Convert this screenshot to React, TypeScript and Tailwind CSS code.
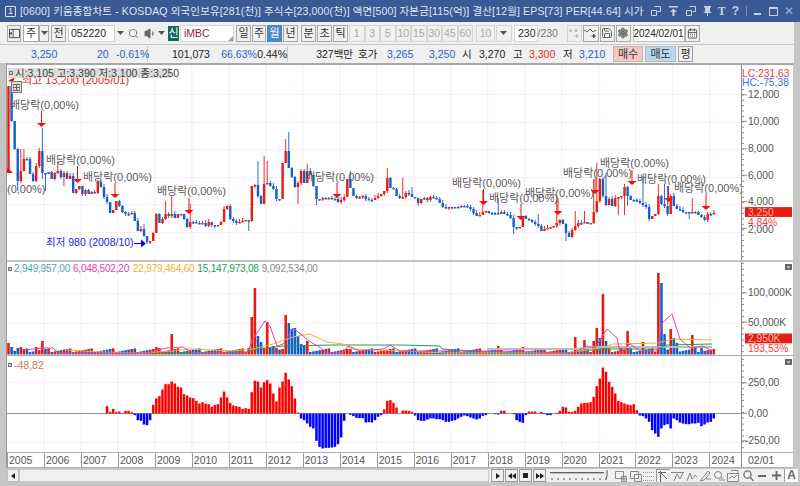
import { Search, Volume1, Settings, Save, CalendarDays } from "lucide-react";

// closes in screen px, one row per year (2005 ~ 2024/02)
const closes = [
  85, 120, 148, 180, 170, 158, 158, 173, 180, 165, 150, 172,
  173, 171, 178, 172, 170, 176, 172, 178, 175, 192, 188, 185,
  193, 189, 193, 191, 192, 181, 186, 196, 201, 212, 209, 200,
  205, 211, 213, 213, 212, 220, 230, 228, 235, 241, 240, 232,
  213, 222, 218, 213, 215, 213, 217, 213, 213, 218, 226, 221,
  221, 222, 223, 222, 225, 221, 224, 225, 224, 221, 208, 205,
  218, 220, 222, 221, 220, 219, 220, 185, 184, 195, 203, 183,
  182, 185, 188, 198, 198, 162, 150, 167, 176, 186, 182, 170,
  182, 170, 174, 185, 198, 198, 197, 198, 197, 198, 198, 201,
  199, 196, 178, 187, 195, 197, 196, 195, 198, 199, 199, 197,
  195, 193, 190, 177, 187, 188, 195, 197, 196, 192, 193, 196,
  197, 202, 198, 197, 199, 196, 197, 198, 202, 206, 207, 206,
  206, 206, 206, 205, 205, 206, 208, 212, 215, 214, 211, 210,
  212, 212, 212, 213, 211, 213, 214, 217, 226, 227, 226, 215,
  218, 219, 221, 223, 225, 230, 228, 227, 226, 225, 222, 219,
  223, 232, 236, 229, 225, 222, 222, 221, 223, 222, 211, 200,
  178, 195, 204, 198, 205, 197, 196, 195, 186, 195, 199, 199,
  200, 202, 204, 206, 218, 215, 213, 195, 203, 205, 213, 195,
  205, 208, 209, 211, 211, 212, 211, 211, 214, 216, 219, 213,
  213, 212,
];

const monthX = (i: number) => 8.5 + 3.08 * i;
const nearest = (x: number) => Math.round((x - 8.5) / 3.08);

// [x, high, low]
const wicks: [number, number, number][] = [
  [20, 148, 0], [25, 148, 0], [17, 0, 190], [42, 127, 178], [45, 0, 190], [57, 160, 0], [63, 0, 185],
  [143, 223, 0], [167, 200, 0], [173, 195, 0], [190, 203, 0], [223, 205, 0], [250, 0, 230],
  [257, 160, 0], [265, 155, 0], [268, 160, 0], [285, 138, 0], [290, 131, 0], [299, 0, 203],
  [307, 163, 0], [318, 0, 204], [349, 170, 0], [388, 167, 0], [404, 177, 0], [413, 186, 0],
  [417, 0, 205], [483, 189, 0], [497, 195, 0], [499, 197, 0], [515, 0, 233], [539, 213, 0],
  [558, 198, 0], [567, 0, 240], [576, 210, 0], [583, 210, 0], [595, 178, 0], [598, 162, 0],
  [605, 172, 205], [617, 0, 214], [623, 183, 214], [629, 0, 205], [643, 175, 0], [650, 0, 220],
  [658, 183, 0], [663, 183, 0], [668, 185, 0], [674, 192, 0], [688, 0, 218], [693, 197, 0],
];

const highs: Record<number, number> = {};
const lows: Record<number, number> = {};
wicks.forEach(([x, h, l]) => {
  if (h) highs[nearest(x)] = h;
  if (l) lows[nearest(x)] = l;
});

const candles = closes.map((c, i) => {
  const o = i === 0 ? 172 : closes[i - 1];
  const top = Math.min(o, c);
  const bot = Math.max(o, c);
  return {
    x: monthX(i),
    top,
    bot: bot - top < 1.5 ? top + 1.5 : bot,
    high: highs[i] ?? top - ((i * 37) % 11) % 4,
    low: lows[i] ?? bot + ((i * 53) % 7) % 3,
    up: c < o,
  };
});

// tops of the tall volume bars, in screen px
const redVol: [number, number][] = [
  [10, 342], [41, 340], [22, 346], [37, 346], [155, 346], [158, 346], [173, 333], [250, 347], [253, 316],
  [256, 287], [266, 321], [276, 347], [285, 314], [306, 340], [351, 348], [391, 348],
  [499, 345], [524, 346], [539, 348], [560, 349], [576, 336], [585, 339], [594, 340], [597, 327],
  [604, 293], [620, 345], [629, 330], [644, 341], [659, 272], [671, 328], [693, 334],
];
const blueVol: [number, number][] = [
  [13, 346], [19, 347], [160, 347], [259, 335], [262, 341], [269, 347], [272, 345], [288, 322], [291, 328],
  [294, 327], [297, 335], [300, 343], [303, 345], [600, 337], [607, 340], [662, 282],
  [665, 333], [675, 337], [678, 342], [696, 345], [700, 347],
];
const volTops: Record<number, number> = {};
[...redVol, ...blueVol].forEach(([x, t]) => {
  volTops[nearest(x)] = t;
});
const volRed = new Set(redVol.map(([x]) => nearest(x)));
const volBlue = new Set(blueVol.map(([x]) => nearest(x)));

const pinkLine =
  "23,349 43,347 53,347 58,352 150,352 153,350 167,347 183,346 193,352 247,352 253,338 265,320 270,325 277,345 283,343 293,327 302,334 312,342 318,345 327,352 343,352 348,345 360,350 383,348 390,344 400,350 500,350 573,352 587,345 595,347 607,328 617,337 620,352 630,343 640,350 657,350 662,322 672,313 680,338 690,347 703,345 712,350";
const orangeLine =
  "65,349 100,351 140,352 173,350 190,348 233,350 253,348 273,343 293,336 310,333 327,341 343,343 353,348 400,350 448,352 567,352 600,347 613,343 657,342 673,338 712,339";
const greenLine =
  "150,352 247,351 257,348 283,345 333,344 400,344 440,345 442,348 487,351 567,352 600,348 657,348 667,344 712,343";
const grayLine = "487,348 573,348 600,346 650,346 712,346";

// macd bars, heights in 3x zoom units
const macdA = [
  22, 5, 14, 4, 6, -1, 8, 8, 4, -5, -20, -22, -33, -35, -20, 26, 45, 52, 72, 88, 88, 96, 90, 80, 78, 58, 54, 48, 46, 38, 30,
  34, 30, 28, 20, 26, 28, 48, 66, 48, 32, 24, 22, 20, 14, 16, 14, 64, 98, 96, 78, 94, 100, 90, 60, 36, 78, 96, 122, 102, 82,
  45, 3, -15, -20, -30, -40, -45, -82, -100, -105, -103, -103, -102, -100, -92, -72, -22, 0, -4, -8, -13, -14, -14, -27, -26,
  -27, -20, -10, -5, 12, 38, 40, 32, 18,
];
const macdB = [
  9, 9, 8, 5, -6, -20, -22, -22, -18, -15, -15, -17, -17, -20, -25, -25, -22, -20, -15, -10, -6, -8, -12, -15, -18, -15, -7,
  -5, 0, 0, -2, -3, 8, 8, 0, 0, -2, -20, -25, -28, -5, 6, 6, 6, 0, 5, -2, -5, -5, 0, 2, 8, 20, 18, 5, 5, 8, 20, 30, 32, 32,
  34, 50, 82, 105, 138, 125, 95, 80, 60, 38, 34, 30, 27, 25, 28, 10, -6, -8, -15, -25, -50, -60, -70, -45, -35, -32, -45, -15,
  -20, -27, -30, -32, -32, -30, -30, -28, -38, -33, -27, -25, -15,
];
const macd: Record<number, number> = {};
macdA.forEach((v, j) => {
  macd[32 + j] = v;
});
macdB.forEach((v, j) => {
  macd[230 - macdB.length + j] = v;
});

const years = Array.from({ length: 20 }, (_, i) => ({
  label: String(2005 + i),
  x: 6.5 + 36.98 * i,
}));

const divs: { x: number; y: number; ax: number; a1: number; a2: number }[] = [
  { x: 10, y: 104, ax: 41.5, a1: 110, a2: 126 },
  { x: 46, y: 159, ax: 77.5, a1: 165, a2: 182 },
  { x: 83, y: 176, ax: 115, a1: 182, a2: 197 },
  { x: 157, y: 190, ax: 189, a1: 197, a2: 213 },
  { x: 305, y: 176, ax: 337, a1: 182, a2: 197 },
  { x: 452, y: 182, ax: 483.5, a1: 188, a2: 204 },
  { x: 489, y: 197, ax: 521, a1: 203, a2: 219 },
  { x: 525, y: 192, ax: 558, a1: 198, a2: 214 },
  { x: 563, y: 172, ax: 595, a1: 178, a2: 193 },
  { x: 600, y: 162, ax: 632, a1: 169, a2: 184 },
  { x: 637, y: 178, ax: 668.5, a1: 185, a2: 201 },
  { x: 674, y: 187, ax: 706, a1: 193, a2: 209 },
];

function Grid({ rows, top, bottom }: { rows: number[]; top: number; bottom: number }) {
  return (
    <g stroke="#fce8fc" strokeWidth="1">
      {rows.map((y) => (
        <line key={y} x1="7" x2="741" y1={y + 0.5} y2={y + 0.5} />
      ))}
      {years.slice(1).map((yr) => (
        <line key={yr.label} x1={yr.x + 0.5} x2={yr.x + 0.5} y1={top} y2={bottom} />
      ))}
    </g>
  );
}

function AxisTicks({ top, bottom, step, major }: { top: number; bottom: number; step: number; major: number[] }) {
  const minor: number[] = [];
  for (let y = major[0] % step; y <= bottom; y += step) if (y >= top) minor.push(y);
  return (
    <g stroke="#8a8a8a" strokeWidth="1">
      {minor.map((y) => (
        <line key={y} x1="741" x2="743" y1={y + 0.5} y2={y + 0.5} />
      ))}
      {major.map((y) => (
        <line key={y} x1="741" x2="746" y1={y + 0.5} y2={y + 0.5} />
      ))}
    </g>
  );
}

function PriceChart() {
  return (
    <svg viewBox="7 64 734 195" className="w-[734px] h-[195px] shrink-0 overflow-hidden">
      <Grid rows={[93, 121, 148, 176, 203, 231]} top={64} bottom={259} />
      {candles.map((c, i) => (
        <g key={i}>
          <line
            x1={c.x}
            x2={c.x}
            y1={c.high}
            y2={c.low}
            stroke={c.up ? "#f0302a" : "#2a6fd8"}
            strokeWidth="1"
          />
          <rect x={c.x - 1.2} y={c.top} width="2.4" height={c.bot - c.top} fill={c.up ? "#ea1c10" : "#1060d0"} />
        </g>
      ))}
      {divs.map((d) => (
        <g key={d.x}>
          <text x={d.x} y={d.y + 4} fontSize="11" fill="#5a5a5a">
            배당락(0,00%)
          </text>
          <line x1={d.ax} x2={d.ax} y1={d.a1} y2={d.a2 - 3} stroke="#f01010" strokeWidth="1" />
          <polygon points={`${d.ax - 4.5},${d.a2 - 4} ${d.ax + 4.5},${d.a2 - 4} ${d.ax},${d.a2}`} fill="#f01010" />
        </g>
      ))}
      <text x="7" y="192" fontSize="11" fill="#5a5a5a">
        (0,00%)
      </text>
      <polygon points="4,172 13,172 8,167" fill="#f01010" />
      <text x="22" y="83" fontSize="11" fill="#f02020">
        최고 13,200 (2005/01)
      </text>
      <polygon points="8,80 15,76 13,81" fill="#f01010" />
      <text x="46" y="245" fontSize="10.5" fill="#2020f0">
        최저 980 (2008/10)
      </text>
      <line x1="134" x2="145" y1="242.5" y2="242.5" stroke="#0000f0" />
      <polygon points="141,238.5 146,242.5 141,246.5" fill="#0000f0" />
    </svg>
  );
}

function PriceAxis() {
  const labels = [
    ["12,000", 92],
    ["10,000", 119],
    ["8,000", 147],
    ["6,000", 174],
    ["4,000", 201],
    ["2,000", 229],
  ] as const;
  return (
    <svg viewBox="741 64 52 195" className="w-[52px] h-[195px] shrink-0 border-l border-[#8a8a8a]">
      <AxisTicks top={84} bottom={259} step={5.5} major={[92, 119, 147, 174, 201, 228]} />
      {labels.map(([t, y]) => (
        <text key={t} x="747" y={y + 4} fontSize="10.5" fill="#555">
          {t}
        </text>
      ))}
      <text x="741" y="74" fontSize="10.5" fill="#f04040">
        LC:231,63
      </text>
      <text x="741" y="84" fontSize="10.5" fill="#3a70e0">
        HC:-75,38
      </text>
      <rect x="744" y="207" width="48" height="10" fill="#e81c10" />
      <text x="747" y="216" fontSize="10.5" fill="#f4b0a0">
        3,250
      </text>
      <text x="747" y="226" fontSize="10.5" fill="#f04040">
        4,84%
      </text>
    </svg>
  );
}

function VolumeChart() {
  return (
    <svg viewBox="7 261 734 93" className="w-[734px] h-[93px] shrink-0">
      <Grid rows={[292, 322]} top={261} bottom={354} />
      {closes.map((_, i) => {
        const top = volTops[i] ?? 351 - ((i * 29) % 7) * 0.6;
        const red = volRed.has(i) ? true : volBlue.has(i) ? false : candles[i].up;
        return (
          <rect key={i} x={monthX(i) - 1.3} y={top} width="2.6" height={353.5 - top} fill={red ? "#ea1c10" : "#1060d0"} />
        );
      })}
      <polyline points={grayLine} fill="none" stroke="#bdbdbd" strokeWidth="2" />
      <polyline points={greenLine} fill="none" stroke="#20a050" strokeWidth="1" />
      <polyline points={orangeLine} fill="none" stroke="#f0b030" strokeWidth="1" />
      <polyline points={pinkLine} fill="none" stroke="#e040b8" strokeWidth="1" />
    </svg>
  );
}

function VolumeAxis() {
  return (
    <svg viewBox="741 261 52 93" className="w-[52px] h-[93px] shrink-0 border-l border-[#8a8a8a]">
      <AxisTicks top={261} bottom={351} step={6} major={[291, 321]} />
      <text x="747" y="295" fontSize="10.5" fill="#555">
        100,000K
      </text>
      <text x="747" y="325" fontSize="10.5" fill="#555">
        50,000K
      </text>
      <rect x="744" y="333" width="48" height="10" fill="#e81c10" />
      <text x="747" y="342" fontSize="10.5" fill="#f8c0b0">
        2,950K
      </text>
      <text x="747" y="352" fontSize="10.5" fill="#f04040">
        193,53%
      </text>
    </svg>
  );
}

function MacdChart() {
  return (
    <svg viewBox="7 355 734 96" className="w-[734px] h-[96px] shrink-0">
      <Grid rows={[381, 441]} top={355} bottom={451} />
      <line x1="7" x2="741" y1="412.5" y2="412.5" stroke="#9a9a9a" />
      {Object.entries(macd).map(([k, v]) => {
        const h = Math.abs(v) / 3;
        return (
          <rect
            key={k}
            x={monthX(Number(k)) - 1.3}
            y={v > 0 ? 412.5 - h : 412.5}
            width="2.5"
            height={h}
            fill={v > 0 ? "#ff0000" : "#0000ff"}
          />
        );
      })}
    </svg>
  );
}

function MacdAxis() {
  return (
    <svg viewBox="741 355 52 96" className="w-[52px] h-[96px] shrink-0 border-l border-[#8a8a8a]">
      <AxisTicks top={356} bottom={451} step={6} major={[381, 412, 440]} />
      <text x="747" y="385" fontSize="10.5" fill="#555">
        250,00
      </text>
      <text x="747" y="416" fontSize="10.5" fill="#555">
        0,00
      </text>
      <text x="744" y="444" fontSize="10.5" fill="#555">
        -250,00
      </text>
    </svg>
  );
}

function CloseMark() {
  return (
    <div className="absolute right-[1px] w-[7px] h-[6px] bg-[#666] flex items-center justify-center text-[6px] leading-none text-white">
      ×
    </div>
  );
}

function Bullet() {
  return <span className="w-[4px] h-[4px] border border-[#777] bg-[#ccc] shrink-0" />;
}

function Caret() {
  return (
    <svg viewBox="0 0 7 4" className="w-[7px] h-[4px]">
      <polygon points="0,0 7,0 3.5,4" fill="#555" />
    </svg>
  );
}

const btn =
  "h-[17px] border border-[#a8a8a8] bg-[#f0f0f0] flex items-center justify-center text-[11px] text-[#333] leading-none shrink-0";
const numBtn =
  "h-[17px] w-[15.5px] border border-[#d4d4d4] bg-[#f0f0f0] flex items-center justify-center text-[10.5px] text-[#aaa] leading-none shrink-0";

function TitleIcons() {
  return (
    <div className="flex items-center ml-auto text-[#c4d0e6] shrink-0">
      <svg viewBox="0 0 10 10" className="w-[10px] h-[10px] ml-[7px]" fill="none" stroke="currentColor">
        <path d="M3.5 .5h6v5h-3M.5 4.5h5v5h-5z" />
      </svg>
      <svg viewBox="0 0 9 10" className="w-[9px] h-[10px] ml-[8px]" fill="currentColor">
        <path d="M0 0h9v1.5H0zM4.5 2.5 8 6H5.5v4h-2V6H1z" />
      </svg>
      <svg viewBox="0 0 10 10" className="w-[10px] h-[10px] ml-[8px]" fill="none" stroke="currentColor">
        <path d="M3.5 .5h6v5h-3M.5 4.5h5v5h-5z" />
      </svg>
      <svg viewBox="0 0 9 10" className="w-[9px] h-[10px] ml-[7px]" fill="currentColor">
        <path d="M1 0h7v1.5H7v4l2 1.5H5v3H4V7H0l2-1.5v-4H1z" />
      </svg>
      <span className="ml-[6px] text-[12px] font-bold leading-none font-['Liberation_Serif',serif]">T</span>
      <span className="ml-[6px] text-[12px] font-bold leading-none">?</span>
      <span className="ml-[7px] w-px h-[10px] bg-[#7f93b8]" />
      <span className="ml-[7px] w-[7px] h-[2px] bg-[#c4d0e6] mt-[6px]" />
      <span className="ml-[8px] w-[9px] h-[9px] border border-[#c4d0e6] border-t-2" />
      <span className="ml-[6px] mr-[6px] text-[12px] leading-none text-[#9fb0cf]">✕</span>
    </div>
  );
}

function ToolbarOne() {
  return (
    <div className="h-[23px] flex items-center pl-[7px] bg-[#f0f0f0] border-b border-[#c8c8c8]">
      <div className={`${btn} w-[14px]`}>
        <svg viewBox="0 0 12 12" className="w-[11px] h-[11px]" fill="none" stroke="#444">
          <path d="M.5 1.5h11v9H.5zM4.5 1.5v9" />
          <path d="M0 6l3-2v4z" fill="#444" stroke="none" />
        </svg>
      </div>
      <div className={`${btn} w-[16px] ml-[2px] bg-white`}>주</div>
      <div className={`${btn} w-[10px]`}>
        <Caret />
      </div>
      <div className={`${btn} w-[15px] ml-[2px]`}>전</div>
      <div className="h-[17px] w-[47px] ml-[2px] border border-[#d0d0d0] bg-white pl-[2px] text-[10.5px] leading-[15px] text-[#222] shrink-0">
        052220
      </div>
      <div className="w-[10px] flex justify-center shrink-0">
        <Caret />
      </div>
      <div className="w-[14px] ml-[1px] flex justify-center shrink-0">
        <Search size={11} color="#777" />
      </div>
      <div className="w-[14px] ml-[3px] flex justify-center shrink-0">
        <Volume1 size={13} color="#666" fill="#666" />
      </div>
      <div className="w-[8px] flex justify-center shrink-0">
        <Caret />
      </div>
      <div className="h-[15px] w-[11px] ml-[3px] bg-[#0f6a5c] text-white text-[11px] leading-[15px] text-center shrink-0">
        신
      </div>
      <div className="relative h-[17px] w-[54px] ml-[1px] border border-[#d8d8d8] bg-white pl-[3px] text-[10.5px] leading-[15px] text-[#a01858] shrink-0">
        iMBC
        <svg viewBox="0 0 5 5" className="absolute right-0 bottom-0 w-[5px] h-[5px]">
          <polygon points="5,0 5,5 0,5" fill="#999" />
        </svg>
      </div>
      <div className={`${btn} w-[15px] ml-[2px]`}>일</div>
      <div className={`${btn} w-[14px] ml-[1px]`}>주</div>
      <div className="h-[17px] w-[15px] ml-[1px] bg-[#4a8ac8] text-white flex items-center justify-center text-[11px] leading-none shrink-0">
        월
      </div>
      <div className={`${btn} w-[15px] ml-[1px]`}>년</div>
      <div className={`${btn} w-[15px] ml-[3px]`}>분</div>
      <div className={`${btn} w-[15px] ml-[1px]`}>초</div>
      <div className={`${btn} w-[15px] ml-[1px]`}>틱</div>
      <div className="flex ml-[1px]">
        {["1", "3", "5", "10", "15", "30", "45", "60"].map((n) => (
          <div key={n} className={numBtn}>
            {n}
          </div>
        ))}
      </div>
      <div className={`${numBtn} w-[19px] ml-[3px]`}>10</div>
      <div className={`${numBtn} w-[11px] ml-[1px]`}>
        <Caret />
      </div>
      <div className="h-[17px] w-[24px] ml-[2px] border border-[#d4d4d4] bg-white text-right pr-[1px] text-[10.5px] leading-[15px] text-[#222] shrink-0">
        230
      </div>
      <span className="w-[29px] text-[10.5px] text-[#777] leading-none shrink-0">/230</span>
      <div className={`${numBtn} w-[15px]`}>
        <svg viewBox="0 0 12 10" className="w-[12px] h-[10px]" fill="#bbb">
          <circle cx="2.5" cy="2.5" r="1.6" />
          <circle cx="8" cy="2.5" r="1.6" />
          <path d="M8 6h1.5v1.5H11v1H9.5V10H8V8.5H6.5v-1H8z" />
        </svg>
      </div>
      <div className={`${btn} w-[16px] ml-[1px]`}>
        <svg viewBox="0 0 13 10" className="w-[13px] h-[10px]" fill="none" stroke="#666">
          <path d="M0 2l3 2 3-3 3 3 3-2" />
          <path d="M9 6h1.5v1.5H12v1h-1.5V10H9V8.5H7.5v-1H9z" fill="#444" stroke="none" />
        </svg>
      </div>
      <div className={`${btn} w-[15px] ml-[1px]`}>
        <Save size={12} color="#666" />
      </div>
      <div className={`${btn} w-[15px] ml-[1px]`}>
        <Settings size={12} color="#666" fill="#888" />
      </div>
      <div className="h-[17px] w-[52px] ml-[2px] border border-[#bbb] bg-white text-center text-[10px] leading-[15px] text-[#222] shrink-0">
        2024/02/01
      </div>
      <div className={`${btn} w-[15px]`}>
        <CalendarDays size={11} color="#555" />
      </div>
    </div>
  );
}

function QuoteCell({ w, children }: { w: string; children: React.ReactNode }) {
  return <div className={`${w} h-[16px] relative shrink-0 border-r border-[#c8c8c8]`}>{children}</div>;
}

function ToolbarTwo() {
  return (
    <div className="h-[18px] flex items-center pl-[7px] bg-[#f0f0f0] text-[10.5px] leading-[16px]">
      <QuoteCell w="w-[141px] flex text-[#2a60d0]">
        <span className="ml-[24px] w-[37px]">3,250 ▼</span>
        <span className="ml-[29px] w-[20px]">20</span>
        <span className="w-[30px] -ml-[1px]">-0.61%</span>
      </QuoteCell>
      <QuoteCell w="w-[140px] flex">
        <span className="ml-[24px] w-[52px] text-[#222]">101,073</span>
        <span className="w-[38px] text-[#2a60d0]">66.63%</span>
        <span className="text-[#222]">0.44%</span>
      </QuoteCell>
      <div className="w-[65px] text-right text-[#222] shrink-0">327백만</div>
      <div className="ml-[5px] w-[22px] text-[#222] shrink-0">호가</div>
      <div className="ml-[7px] w-[42px] text-[#2a60d0] shrink-0">3,265</div>
      <div className="w-[33px] text-[#2a60d0] shrink-0">3,250</div>
      <div className="w-[17px] text-[#222] shrink-0">시</div>
      <div className="w-[34px] text-[#222] shrink-0">3,270</div>
      <div className="w-[16px] text-[#222] shrink-0">고</div>
      <div className="w-[34px] text-[#e82a20] shrink-0">3,300</div>
      <div className="w-[16px] text-[#222] shrink-0">저</div>
      <div className="w-[34px] text-[#2a60d0] shrink-0">3,210</div>
      <div className="h-[16px] w-[30px] bg-[#f4c8c0] border border-[#b8b8b8] text-center text-[11px] leading-[14px] text-[#333] shrink-0">
        매수
      </div>
      <div className="h-[16px] w-[31px] ml-[2px] bg-[#b8d8f0] border border-[#b8b8b8] text-center text-[11px] leading-[14px] text-[#333] shrink-0">
        매도
      </div>
      <div className="h-[16px] w-[15px] ml-[2px] bg-[#f0f0f0] border border-[#a0a0a0] text-center text-[11px] leading-[14px] text-[#333] shrink-0">
        평
      </div>
    </div>
  );
}

function TimeAxis() {
  return (
    <div className="flex h-[16px] border-y border-[#b0b0b0] text-[10.5px] text-[#555] leading-[14px]">
      <div className="w-[734px] flex shrink-0">
        {years.map((yr) => (
          <div key={yr.label} className="w-[36.98px] border-l border-[#9a9a9a] pl-[1px] shrink-0">
            {yr.label}
          </div>
        ))}
      </div>
      <div className="w-[52px] border-l border-[#8a8a8a] pl-[6px] shrink-0">02/01</div>
    </div>
  );
}

function ScrollRow() {
  const media = "h-[13px] w-[13px] border border-[#999] bg-[#f0f0f0] flex items-center justify-center shrink-0 ml-[1px]";
  return (
    <div className="h-[13px] mt-[1px] flex items-center bg-[#f0f0f0]">
      <div className="w-[12px] h-[13px] border border-[#c0c0c0] flex items-center justify-center shrink-0">
        <svg viewBox="0 0 4 6" className="w-[4px] h-[6px]">
          <polygon points="4,0 4,6 0,3" fill="#222" />
        </svg>
      </div>
      <div className="w-[470px] h-[13px] border border-[#c8c8c8] bg-[#efefef] shrink-0" />
      <div className={`${media} ml-[2px]`}>
        <svg viewBox="0 0 4 6" className="w-[4px] h-[6px]">
          <polygon points="0,0 4,3 0,6" fill="#222" />
        </svg>
      </div>
      <div className={media}>
        <svg viewBox="0 0 8 6" className="w-[8px] h-[6px]" fill="#222">
          <polygon points="4,0 4,6 0,3" />
          <polygon points="8,0 8,6 4,3" />
        </svg>
      </div>
      <div className={media}>
        <span className="w-[5px] h-[5px] bg-[#222]" />
      </div>
      <div className={media}>
        <svg viewBox="0 0 8 6" className="w-[8px] h-[6px]" fill="#222">
          <polygon points="0,0 4,3 0,6" />
          <polygon points="4,0 8,3 4,6" />
        </svg>
      </div>
      <svg viewBox="0 0 60 13" className="w-[60px] h-[13px] ml-[4px] shrink-0">
        <line x1="0" x2="54" y1="3.5" y2="3.5" stroke="#666" />
        <line x1="0" x2="54" y1="4.5" y2="4.5" stroke="#bbb" />
        <path d="M57 1v6l-1 3" stroke="#555" fill="none" />
        {[2, 8, 14, 20, 26, 32, 38, 44, 50, 56].map((x) => (
          <line key={x} x1={x} x2={x} y1="9" y2="11" stroke="#555" />
        ))}
      </svg>
      <BottomTools />
    </div>
  );
}

function BottomTools() {
  const stroke = "#888";
  return (
    <div className="flex items-center h-[13px] ml-[4px]">
      <svg viewBox="0 0 14 12" className="w-[14px] h-[12px]" fill="none" stroke={stroke}>
        <path d="M1.5 1.5h8v7h-8zM7.5 6.5h5v5h-5zM10 6.5v5M7.5 9h5" />
      </svg>
      <svg viewBox="0 0 14 12" className="w-[14px] h-[12px] ml-[1px]" fill="none" stroke={stroke}>
        <path d="M1.5 1.5h8v7h-8zM5.5 4.5h7v7h-7z" />
      </svg>
      <svg viewBox="0 0 12 12" className="w-[12px] h-[12px]" fill="none" stroke="#999" strokeDasharray="1 1">
        <path d="M0 2.5h12M0 6.5h12M0 10.5h12" />
      </svg>
      <div className="w-[14px] h-[13px] ml-[1px] border-l border-t border-[#999] flex items-center justify-center">
        <svg viewBox="0 0 11 11" className="w-[11px] h-[11px]" fill="none" stroke="#666">
          <path d="M0 1.5h8M2.5 0v11M3 2l6 6" />
        </svg>
      </div>
      <svg viewBox="0 0 14 12" className="w-[14px] h-[12px] ml-[1px]" fill="none" stroke={stroke}>
        <path d="M0 2.5h13M3 11l3-7 3 5 3-6" />
      </svg>
      <svg viewBox="0 0 12 12" className="w-[12px] h-[12px] ml-[1px]" fill="none" stroke={stroke}>
        <path d="M1 11l3-8 2 6 3-4 2 2" />
      </svg>
      <svg viewBox="0 0 13 12" className="w-[13px] h-[12px] ml-[1px]" fill="none" stroke={stroke}>
        <path d="M1 11l5-6 3-4 2 2-3 4-3 3zM7 9h5" />
      </svg>
      <svg viewBox="0 0 13 12" className="w-[13px] h-[12px] ml-[1px]" fill="none" stroke={stroke}>
        <circle cx="5" cy="5" r="3.5" />
        <path d="M9 7v4M11 9v2M7 9v2" />
      </svg>
      <svg viewBox="0 0 12 12" className="w-[12px] h-[12px] ml-[1px]" fill="none" stroke={stroke}>
        <path d="M.5 3.5h11v8H.5zM2 9l3-3 2 2 3-3M4 .5h7v3" />
      </svg>
      <svg viewBox="0 0 11 12" className="w-[11px] h-[12px] ml-[4px]" fill="none" stroke="#777" strokeWidth="1.4">
        <circle cx="4.5" cy="4.5" r="3.6" />
        <path d="M7 7l3.5 4" />
      </svg>
      <span className="w-[8px] h-[2px] bg-[#666] ml-[4px]" />
      <svg viewBox="0 0 9 9" className="w-[9px] h-[9px] ml-[6px]" fill="#666">
        <path d="M3.6 0h1.8v3.6H9v1.8H5.4V9H3.6V5.4H0V3.6h3.6z" />
      </svg>
      <div className="w-[14px] h-[13px] ml-[3px] border-l border-[#999] bg-white text-[12px] font-bold leading-[13px] text-center text-[#666]">
        A
      </div>
    </div>
  );
}

export default function App() {
  return (
    <div className="w-[800px] h-[486px] overflow-hidden flex flex-col bg-[#c6c6c6] font-['Liberation_Sans','Noto_Sans_CJK_KR',sans-serif]">
      <div className="h-[22px] flex items-center bg-[#3a5a96] text-[#dfe6f2] shrink-0">
        <span className="ml-[5px] w-[11px] h-[11px] border border-[#dfe6f2] rounded-[1px] text-[9px] leading-[9px] text-center shrink-0">
          1
        </span>
        <span className="ml-[4px] text-[10.5px] leading-none whitespace-nowrap tracking-[0.15px]">
          [0600] 키움종합차트 - KOSDAQ 외국인보유[281(천)] 주식수[23,000(천)] 액면[500] 자본금[115(억)] 결산[12월] EPS[73] PER[44.64] 시가
        </span>
        <TitleIcons />
      </div>
      <div className="mx-[0px] flex flex-col pr-[6px]">
        <ToolbarOne />
        <ToolbarTwo />
      </div>
      <div className="h-[2px] bg-[#a8a8a8] ml-[6px] mr-[7px] shrink-0" />
      <div className="ml-[7px] w-[786px] flex flex-col bg-white border-l border-[#999] -translate-x-px box-content">
        <div className="relative flex border-b-2 border-[#c4c4c4]">
          <div className="absolute left-[1px] top-[3px] h-[10px] w-[163px] bg-[#dcdcdc] flex items-center gap-[2px] pl-[1px] text-[10.5px] text-[#444]">
            <Bullet />
            <span className="leading-none whitespace-nowrap">시:3,105 고:3,390 저:3,100 종:3,250</span>
          </div>
          <div className="absolute left-[4px] top-[16px] w-[11px] h-[12px] border border-[#777] bg-[#ddd] flex items-center justify-center">
            <svg viewBox="0 0 7 7" className="w-[7px] h-[7px]" fill="none" stroke="#666">
              <path d="M0 .5h7v6H0zM0 3.5h7M3.5 0v7" />
            </svg>
          </div>
          <PriceChart />
          <PriceAxis />
        </div>
        <div className="relative flex border-b border-[#aaa]">
          <div className="absolute left-[1px] top-[1px] flex items-center gap-[2px] text-[10px] leading-[12px] whitespace-nowrap tracking-[-0.2px]">
            <Bullet />
            <span className="text-[#4aa8a0]">2,949,957,00</span>
            <span className="ml-[1px] text-[#e040b0]">6,048,502,20</span>
            <span className="ml-[2px] text-[#f0b030]">22,979,464,60</span>
            <span className="ml-[1px] text-[#20a050]">15,147,973,08</span>
            <span className="ml-[1px] text-[#888]">9,092,534,00</span>
          </div>
          <div className="absolute right-0 top-[2px] w-[9px]">
            <CloseMark />
          </div>
          <VolumeChart />
          <VolumeAxis />
        </div>
        <div className="relative flex">
          <div className="absolute left-[1px] top-[3px] flex items-center gap-[2px] text-[10.5px] leading-[12px] text-[#c08050]">
            <Bullet />
            <span>-48,82</span>
          </div>
          <div className="absolute right-0 top-[3px] w-[9px]">
            <CloseMark />
          </div>
          <MacdChart />
          <MacdAxis />
        </div>
        <TimeAxis />
      </div>
      <div className="ml-[7px] w-[786px] shrink-0">
        <ScrollRow />
      </div>
    </div>
  );
}
